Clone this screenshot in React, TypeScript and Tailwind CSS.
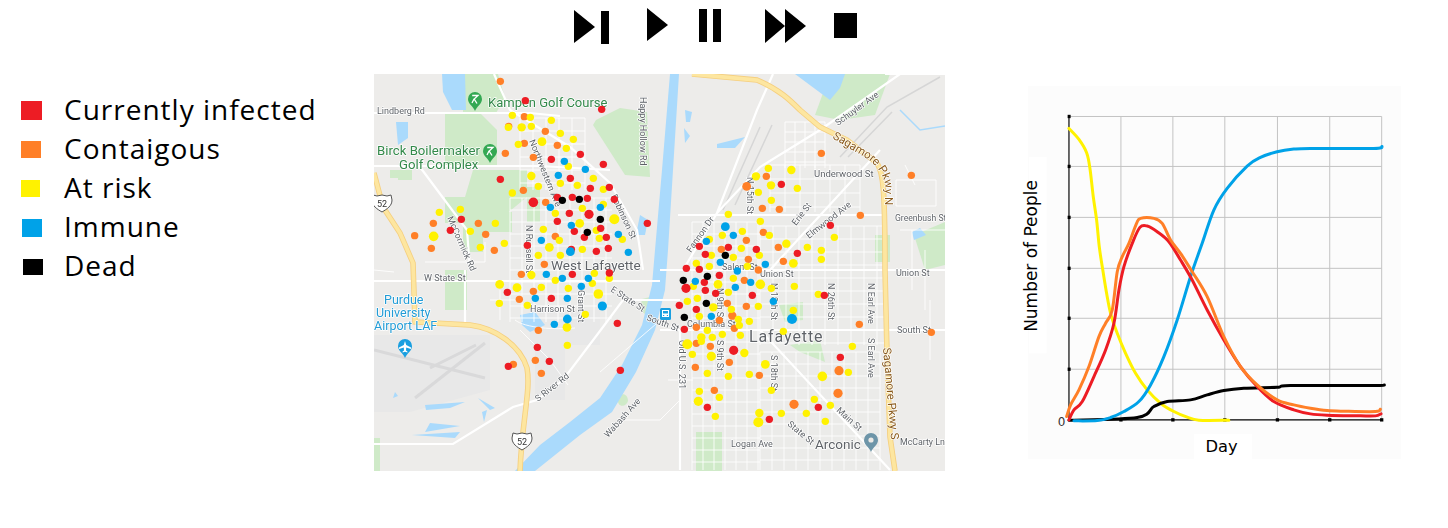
const RED = "#ed1c24";
const ORANGE = "#ff7f27";
const YELLOW = "#fff200";
const BLUE = "#00a2e8";

type Pt = number[];

// dots were read off 3x crops, so convert back to page coords
const toPage = (ox: number, oy: number, pts: Pt[]) =>
  pts.map(([x, y, r]) => [ox + x / 3, oy + y / 3, r ?? 3.7]);

const dotGroups: { color: string; pts: number[][] }[] = [
  {
    color: ORANGE,
    pts: [
      ...toPage(370, 70, [[391,34],[463,140],[416,169],[526,184],[463,220],[562,226],[406,250],[490,262],[460,361],[527,397],[190,460],[134,497],[325,460],[347,493],[184,535],[373,541],[556,499],[523,583]]),
      ...toPage(660, 70, [[484,250],[754,316],[319,319],[260,349,4.4],[307,415],[358,418],[601,436],[310,487],[259,511],[184,538],[355,532],[265,568],[370,574],[295,600]]),
      ...toPage(370, 270, [[454,13],[490,64],[448,88],[505,181],[496,271],[430,283],[514,310]]),
      ...toPage(660, 270, [[253,31],[202,100],[259,109],[217,137,4.2],[178,151],[109,172],[223,175],[109,220],[151,229],[208,277],[106,292],[298,316],[598,163],[814,187],[537,302,4.6],[534,370,4.6],[402,403,4.6],[163,361]]),
    ],
  },
  {
    color: YELLOW,
    pts: [
      ...toPage(370, 70, [[427,136],[481,142],[544,151],[415,172],[455,172,4.2],[484,169],[571,190],[610,208],[516,215,4.4],[445,223],[589,235],[595,289],[484,318,4.2],[670,325],[505,349],[571,340],[622,346],[700,358],[427,369],[637,415],[700,403],[556,430],[733,448,5],[629,460,4.4],[208,427],[271,418],[376,460],[301,484],[191,499,4.8],[520,478],[679,481],[688,505],[757,508],[403,520],[331,532],[538,532,4.4],[568,511],[637,538],[505,556],[571,556]]),
      ...toPage(660, 70, [[325,295],[394,300,4.2],[288,319,4.2],[333,346,4.2],[412,355],[295,367],[334,391],[205,433],[301,454],[247,484],[187,496],[328,496],[148,508],[379,521,4.2],[442,532],[244,535],[484,541],[298,556],[220,562],[154,556],[484,568],[400,580,4.4],[109,580],[148,589],[262,589],[523,502]]),
      ...toPage(370, 270, [[484,15,4.2],[673,10],[556,31],[718,25],[667,40],[389,43,4.4],[441,53,4.4],[514,52],[595,55],[685,72,4.8],[388,100],[472,106],[646,133],[591,172,4.4],[592,226]]),
      ...toPage(660, 270, [[220,25],[174,43,4.4],[301,43,4.8],[403,49],[334,55],[475,73],[100,49],[205,67],[112,85],[82,94],[295,109],[160,112,4.2],[214,118],[118,139],[400,121],[235,148],[238,166],[268,154],[142,181],[187,193],[241,196],[370,184],[124,202,4.2],[157,202],[124,214],[82,223,5],[97,253],[253,249,4.2],[154,259,4.6],[316,283,4.4],[142,310],[205,319],[268,313],[487,319,4.8],[565,307],[577,229],[334,361],[118,364],[178,382],[115,394,4.6],[463,388],[511,406],[298,429,4.2],[364,430],[439,430],[166,439],[295,457,5],[496,454]]),
    ],
  },
  {
    color: RED,
    pts: [
      ...toPage(370, 70, [[466,92],[695,118],[544,268],[631,253],[700,283],[391,328],[601,325],[661,355],[718,352],[562,382],[607,382],[652,385],[733,388],[490,397,4.8],[598,430],[657,433,4.6],[562,454],[613,484],[692,475],[643,502],[709,502],[274,448],[241,481],[472,526],[679,544],[715,535],[832,460],[604,538]]),
      ...toPage(660, 70, [[364,343],[511,466],[118,529],[205,532],[289,538],[136,553],[412,550],[79,595],[118,598]]),
      ...toPage(370, 270, [[607,13],[718,9],[412,67],[544,85],[742,160],[502,232],[538,274],[415,289],[751,301]]),
      ...toPage(660, 270, [[178,16],[133,37],[78,55,4.6],[136,61],[167,70],[277,76],[493,76],[58,106],[109,118],[73,178],[221,241,4.6],[541,262],[475,412],[142,412],[328,448]]),
    ],
  },
  {
    color: BLUE,
    pts: [
      ...toPage(370, 70, [[583,274],[646,298],[565,316],[541,412],[691,412],[604,466],[745,493],[514,511],[601,545,4.4],[775,547]]),
      ...toPage(660, 70, [[196,470,4.4],[220,496],[139,514],[181,577],[316,583]]),
      ...toPage(370, 270, [[529,13],[577,25],[655,25],[634,49],[496,85],[592,85],[697,108,4.6],[592,147,4.4],[553,163]]),
      ...toPage(660, 270, [[232,3],[106,34],[272,37],[226,52],[340,94],[154,139],[396,147,5]]),
    ],
  },
  {
    color: "#000000",
    pts: [
      ...toPage(370, 70, [[577,391],[628,388],[691,448],[652,487]]),
      ...toPage(660, 70, [[196,556]]),
      ...toPage(660, 270, [[70,31],[142,19],[139,100],[73,142]]),
    ],
  },
];

const range = (from: number, to: number, step: number) => {
  const out: number[] = [];
  for (let v = from; v <= to; v += step) out.push(v);
  return out;
};

const grid = (x0: number, x1: number, y0: number, y1: number, sx: number, sy: number) =>
  range(x0, x1, sx).map((x) => `M${x} ${y0}V${y1}`).join("") +
  range(y0, y1, sy).map((y) => `M${x0} ${y}H${x1}`).join("");

const minorRoads = [
  grid(510, 612, 198, 322, 12, 12),
  grid(520, 585, 118, 190, 13, 13),
  grid(692, 760, 222, 470, 11, 12),
  grid(760, 885, 226, 345, 13, 13),
  grid(760, 880, 352, 470, 12, 12),
  grid(785, 825, 122, 168, 10, 10),
  grid(770, 860, 165, 212, 15, 14),
  "M896 180h40v26h-40zM905 165l10 20M900 230h45M912 230v60M925 250v60M930 300v60",
  "M425 262h60v-20M490 300h30M500 290v30M515 320c10 8 40 10 60 8M520 330l30 30 18 25",
  "M374 270l20 2M600 372l70 -60M668 380h25M620 420h40l20 -20v40",
].join("");

const majorRoads = [
  "M374 113H530L560 116",
  "M494 74L510 110L570 147L610 183L637 230L643 270",
  "M374 166H540L610 170",
  "M420 167L467 230L470 270",
  "M374 281H660",
  "M465 270V323",
  "M374 444H453L513 407L537 400L563 380L603 327L623 300L680 300",
  "M660 270H945",
  "M660 330H945",
  "M680 470V330",
  "M683 270L717 213L757 110L773 74",
  "M717 213L760 167L820 130L900 74",
  "M760 330L890 470",
  "M770 270L880 150",
  "M885 74H945",
  "M678 215H885",
].join("");

const rails = "M723 210L760 127M735 205L772 125M840 157L887 107L940 77M848 157L892 112";

const highwayLeft = "M374 173L383 207L400 233L413 263L415 322L470 325C495 328 520 345 527 368C531 390 522 420 520 471";
const highwayRight = "M692 74L757 80C780 90 790 100 800 110L820 127L847 140L877 163C883 172 885 187 885 270L887 353L890 437L895 471";

const GRAY = "#5f6368";
const labels: { t: string; x: number; y: number; r?: number; s?: number; c?: string; ls?: number }[] = [
  { t: "Lindberg Rd", x: 377, y: 114, s: 9 },
  { t: "Northwestern Ave", x: 529, y: 141, r: 68, s: 9 },
  { t: "Happy Hollow Rd", x: 640, y: 97, r: 90, s: 9 },
  { t: "Robinson St", x: 611, y: 196, r: 65, s: 9 },
  { t: "McCormick Rd", x: 447, y: 218, r: 66, s: 9 },
  { t: "N Russell St", x: 526, y: 225, r: 90, s: 9 },
  { t: "West Lafayette", x: 551, y: 270, s: 13.5 },
  { t: "W State St", x: 424, y: 281, s: 9 },
  { t: "Harrison St", x: 530, y: 312, s: 9 },
  { t: "Grant St", x: 578, y: 290, r: 90, s: 9 },
  { t: "E State St", x: 610, y: 291, r: 33, s: 9 },
  { t: "South St", x: 646, y: 320, r: 20, s: 9 },
  { t: "S River Rd", x: 538, y: 402, r: -38, s: 9 },
  { t: "Wabash Ave", x: 608, y: 438, r: -48, s: 9 },
  { t: "Schuyler Ave", x: 838, y: 126, r: -36, s: 9 },
  { t: "Underwood St", x: 814, y: 177, s: 9.5 },
  { t: "Greenbush St", x: 895, y: 221, s: 8.6 },
  { t: "Erie St", x: 796, y: 226, r: -52, s: 9 },
  { t: "Elmwood Ave", x: 809, y: 239, r: -38, s: 9 },
  { t: "Fannon Dr", x: 691, y: 253, r: -55, s: 9 },
  { t: "N 15th St", x: 747, y: 177, r: 90, s: 9 },
  { t: "Salem St", x: 722, y: 270, s: 9 },
  { t: "Union St", x: 760, y: 277, s: 9 },
  { t: "Union St", x: 896, y: 276, s: 9 },
  { t: "N 18th St", x: 771, y: 283, r: 90, s: 9 },
  { t: "N 26th St", x: 828, y: 283, r: 90, s: 9 },
  { t: "N Earl Ave", x: 868, y: 283, r: 90, s: 9 },
  { t: "S Earl Ave", x: 868, y: 338, r: 90, s: 9 },
  { t: "Columbia St", x: 687, y: 327, s: 9 },
  { t: "South St", x: 897, y: 333, s: 9 },
  { t: "Lafayette", x: 749, y: 342, s: 16, ls: 0.9 },
  { t: "S 9th St", x: 717, y: 340, r: 90, s: 9 },
  { t: "N 9th St", x: 717, y: 288, r: 90, s: 9 },
  { t: "Old U.S. 231", x: 679, y: 340, r: 90, s: 9 },
  { t: "S 18th St", x: 771, y: 355, r: 90, s: 9 },
  { t: "Main St", x: 836, y: 411, r: 42, s: 9 },
  { t: "State St", x: 787, y: 425, r: 40, s: 9 },
  { t: "Logan Ave", x: 731, y: 447, s: 9 },
  { t: "Arconic", x: 815, y: 449, s: 13.5 },
  { t: "McCarty Ln", x: 900, y: 445, s: 8.8 },
  { t: "Sagamore Pkwy S", x: 883, y: 348, r: 85, s: 11.5, c: "#8a5a1c" },
  { t: "Kampen Golf Course", x: 488, y: 107, s: 13, c: "#33894a" },
  { t: "Birck Boilermaker", x: 377, y: 155, s: 13.2, c: "#33894a" },
  { t: "Golf Complex", x: 399, y: 169, s: 13.2, c: "#33894a" },
  { t: "Purdue", x: 384, y: 304, s: 12.5, c: "#229cd6" },
  { t: "University", x: 376, y: 317, s: 12.5, c: "#229cd6" },
  { t: "Airport LAF", x: 374, y: 330, s: 12.5, c: "#229cd6" },
];

function Pin({ x, y, color, children }: { x: number; y: number; color: string; children?: React.ReactNode }) {
  return (
    <g transform={`translate(${x} ${y})`}>
      <path d="M0 11C-2 6-7 4-7 -1A7 7 0 1 1 7 -1C7 4 2 6 0 11Z" fill={color} />
      {children}
    </g>
  );
}

function Shield({ x, y }: { x: number; y: number }) {
  return (
    <g transform={`translate(${x} ${y})`}>
      <path d="M-9 -8L-5 -7L0 -8L5 -7L9 -8L10 -3C10 3 5 6 0 9C-5 6 -10 3 -10 -3Z" fill="#fff" stroke="#555" strokeWidth="1" />
      <text x="0" y="3.5" textAnchor="middle" fontSize="9" fontFamily="Roboto, sans-serif" fill="#333">52</text>
    </g>
  );
}

const golfMark = <path d="M-2.8 -4.5H3L-0.8 -1L2 3.5M-1 -1L-3 3" stroke="#fff" strokeWidth="1.3" fill="none" />;

function MapPanel() {
  return (
    <svg viewBox="374 74 571 397" className="block w-[571px] h-[397px] shrink-0 blur-[0.35px]">
      <defs>
        <path id="sagamore" d="M832 138L866 158C878 166 884 176 885 186L885 215" />
      </defs>
      <rect x="374" y="74" width="571" height="397" fill="#edecea" />

      {/* built up areas */}
      <path d="M500 190H640V330H500ZM690 170H880V470H690Z" fill="#ebebe9" />
      <path d="M530 310H600V345H530ZM535 345H565V400H535ZM374 335H490V390L410 412H374Z" fill="#e8e8e8" />

      {/* parks */}
      <g fill="#cfeac8">
        <path d="M463 74H498L505 98L496 113H463Z" />
        <path d="M445 113H480L497 130V167H445Z" />
        <path d="M473 170H527V197L505 215H465V197Z" />
        <path d="M445 197H480V223H445Z" />
        <path d="M463 223H483V252H463ZM470 212H512V232H470Z" />
        <path d="M527 187H540V222H527Z" />
        <path d="M596 120L620 108L647 112L650 177L625 175L593 125Z" />
        <path d="M445 270H467V310H445Z" />
        <path d="M390 170H412V178H390ZM398 173H412V180H398Z" />
        <path d="M830 74L890 74L875 115L840 120L815 115Z" />
        <path d="M779 305L803 302V320L785 322Z" />
        <path d="M790 345L820 340L825 362L800 352Z" />
        <path d="M696 432H722V471H696Z" />
        <path d="M875 235H890V262H875Z" />
        <path d="M914 235L945 222V265L925 270Z" />
        <path d="M618 397C622 392 628 394 628 401C626 408 616 408 618 397Z" />
        <path d="M373 438H380V471H373Z" />
        <path d="M642 299L658 295L650 318L640 310Z" />
      </g>

      {/* water */}
      <g fill="#aadafc">
        <path d="M670 74L662 170L655 250L652 285L642 325L622 365L600 398L570 422L540 445L515 471H535L555 455L580 435L612 412L636 372L655 330L665 290L668 250L673 170L679 74Z" />
        <path d="M442 74H465L466 110H452L443 92Z" />
        <path d="M396 122H408V138L398 145Z" />
        <path d="M795 74H845L840 88L830 100Z" />
        <path d="M900 110L920 130L945 126" fill="none" stroke="#aadafc" strokeWidth="1.5" />
        <path d="M685 110L692 112L690 122H686ZM684 128L690 136L685 143Z" />
        <path d="M717 144L745 137L735 148H717Z" />
        <path d="M640 215L648 220L645 235H636Z" />
        <path d="M912 232L920 228L926 235L914 240Z" />
        <path d="M520 315L535 312L545 325L530 332L522 325Z" />
        <path d="M425 405L465 402L450 408L426 410ZM430 423L460 426L425 432ZM412 435L460 432L455 438ZM478 398L495 408L490 410Z" />
        <path d="M395 392L398 396L393 398ZM482 412L487 410L484 422Z" />
      </g>

      {/* airport and rail */}
      <g stroke="#d9d9da" fill="none" strokeWidth="3">
        <path d="M374 350L485 378" />
        <path d="M415 398L485 343" />
        <path d="M430 368L476 345" />
      </g>
      <path d={rails} stroke="#d6d6d6" strokeWidth="1.5" fill="none" />

      {/* streets */}
      <path d={minorRoads} stroke="#fff" strokeOpacity="0.85" strokeWidth="1" fill="none" />
      <path d={majorRoads} stroke="#fff" strokeWidth="2.2" fill="none" />
      <g fill="none">
        <path d={highwayLeft} stroke="#f5cf7f" strokeWidth="5.5" />
        <path d={highwayLeft} stroke="#fde6a0" strokeWidth="3.8" />
        <path d={highwayRight} stroke="#f5cf7f" strokeWidth="5.5" />
        <path d={highwayRight} stroke="#fde6a0" strokeWidth="3.8" />
      </g>

      {/* labels */}
      <g fontFamily="Roboto, sans-serif" stroke="#fff" strokeWidth="1.4" paintOrder="stroke" strokeLinejoin="round">
        {labels.map((l) => (
          <text
            key={`${l.t}-${l.x}`}
            x={l.x}
            y={l.y}
            fontSize={l.s}
            letterSpacing={l.ls}
            fill={l.c ?? GRAY}
            transform={l.r ? `rotate(${l.r} ${l.x} ${l.y})` : undefined}
          >
            {l.t}
          </text>
        ))}
        <text fontSize="11.5" fill="#8a5a1c">
          <textPath href="#sagamore">Sagamore Pkwy N</textPath>
        </text>
      </g>

      <Pin x={475} y={100} color="#34a853">{golfMark}</Pin>
      <Pin x={490} y={152} color="#34a853">{golfMark}</Pin>
      <Pin x={405} y={347} color="#1a9fe0">
        <path d="M0 -6L1.2 -2L6 0.5V2L1.2 0.5L1 3.5L2.4 4.5V5.5L0 4.8L-2.4 5.5V4.5L-1 3.5L-1.2 0.5L-6 2V0.5L-1.2 -2Z" fill="#fff" />
      </Pin>
      <Pin x={871} y={441} color="#6d95a8">
        <circle cx="0" cy="-1" r="2.6" fill="#ebe9e5" />
      </Pin>
      <rect x="660" y="308" width="11" height="12" rx="1.5" fill="#1a9fe0" />
      <path d="M662 310h7v7h-7z" fill="#fff" />
      <path d="M663 311h5v2.5h-5zM663 315h1.2v1h-1.2zM666.8 315h1.2v1h-1.2z" fill="#1a9fe0" />
      <Shield x={382} y={203} />
      <Shield x={522} y={441} />

      {dotGroups.map((g) =>
        g.pts.map(([x, y, r]) => <circle key={`${g.color}-${x}-${y}`} cx={x} cy={y} r={r} fill={g.color} />),
      )}
    </svg>
  );
}

// catmull-rom through the read points so the lines don't look faceted
const smooth = (raw: string) => {
  const p = raw.split(" ").map((s) => s.split(",").map(Number));
  let d = `M${p[0][0]} ${p[0][1]}`;
  for (let i = 0; i < p.length - 1; i++) {
    const a = p[Math.max(i - 1, 0)];
    const b = p[i];
    const c = p[i + 1];
    const e = p[Math.min(i + 2, p.length - 1)];
    d += `C${b[0] + (c[0] - a[0]) / 6} ${b[1] + (c[1] - a[1]) / 6} ${c[0] - (e[0] - b[0]) / 6} ${c[1] - (e[1] - b[1]) / 6} ${c[0]} ${c[1]}`;
  }
  return d;
};

const curves: { color: string; pts: string }[] = [
  { color: "#fff200", pts: "175,145 205,178 228,218 238,265 248,350 258,420 266,500 275,560 288,640 300,700 320,760 345,820 375,880 410,930 450,970 490,995 530,1012 565,1021 655,1021" },
  { color: "#000000", pts: "175,1021 380,1013 430,980 470,965 540,960 590,945 640,932 700,925 800,922 840,917 1090,917 1122,915" },
  { color: "#00a2e8", pts: "190,1023 260,1022 300,1013 340,995 385,965 420,915 460,830 500,720 540,590 575,490 610,390 650,325 710,258 750,232 800,215 850,207 900,205 1090,205 1115,199" },
  { color: "#ed1c24", pts: "175,1020 190,990 215,965 250,890 285,810 310,730 325,630 340,560 365,490 388,442 410,438 440,455 475,485 510,540 545,600 590,690 640,780 690,860 740,920 790,965 850,990 900,1002 950,1006 1050,1008 1095,1008 1112,1002" },
  { color: "#ff7f27", pts: "168,1010 180,975 205,930 235,860 265,770 285,730 305,690 320,575 335,530 355,490 378,430 390,415 430,415 455,430 480,480 510,520 545,575 590,650 640,770 690,860 740,915 800,960 850,975 900,985 950,992 1000,994 1095,995 1110,988" },
];

const gridX = [331, 487, 643, 801, 958, 1114];
const gridY = [109, 259, 412, 565, 715, 868];

// chart is drawn in the units of the 3x crop, hence the large numbers
function ChartPanel() {
  return (
    <svg viewBox="52 18 1120 1119" className="block w-[373px] h-[373px] shrink-0 overflow-visible">
      <rect x="52" y="18" width="1120" height="1119" fill="#fcfcfc" />
      <g stroke="#c3c3c3" strokeWidth="3">
        {gridX.map((x) => <line key={x} x1={x} y1="109" x2={x} y2="1020" />)}
        {gridY.map((y) => <line key={y} x1="175" y1={y} x2="1114" y2={y} />)}
      </g>
      <rect x="55" y="230" width="53" height="590" fill="#fff" />
      <rect x="550" y="1062" width="175" height="75" fill="#fff" />
      <path d="M175 109V1020H1114" stroke="#000" strokeWidth="3.5" fill="none" />
      {gridY.map((y) => <rect key={y} x="171" y={y - 5} width="9" height="10" fill="#000" />)}
      {gridX.map((x) => <rect key={x} x={x - 5} y="1015" width="10" height="10" fill="#000" />)}
      {curves.map((c) => (
        <path key={c.color} d={smooth(c.pts)} fill="none" stroke={c.color} strokeWidth="9" strokeLinejoin="round" strokeLinecap="round" />
      ))}
      <g fontFamily="'DejaVu Sans', sans-serif" fill="#000">
        <text x="153" y="1038" textAnchor="middle" fontSize="36" fill="#333">0</text>
        <text x="633" y="1115" textAnchor="middle" fontSize="49">Day</text>
        <text x="80" y="528" textAnchor="middle" fontSize="51" transform="rotate(-90 80 528)">Number of People</text>
      </g>
    </svg>
  );
}

const legend = [
  { label: "Currently infected", swatch: "w-[21px] h-[19px] bg-[#ed1c24] ml-[21px]" },
  { label: "Contaigous", swatch: "w-[20px] h-[17px] bg-[#ff7f27] ml-[21px]" },
  { label: "At risk", swatch: "w-[19px] h-[17px] bg-[#fff200] ml-[21px]" },
  { label: "Immune", swatch: "w-[20px] h-[18px] bg-[#00a2e8] ml-[22px]" },
  { label: "Dead", swatch: "w-[20px] h-[16px] bg-black ml-[23px]" },
];

function Controls() {
  return (
    <div className="flex items-start h-[74px] pt-[8px] pl-[574px]">
      <svg viewBox="0 8 35 36" className="w-[35px] h-[36px] fill-black">
        <path d="M0 10L21 27L0 43Z" />
        <rect x="27" y="11" width="8" height="33" />
      </svg>
      <svg viewBox="0 8 21 36" className="ml-[38px] w-[21px] h-[36px] fill-black">
        <path d="M0 8L21 25L0 41Z" />
      </svg>
      <svg viewBox="0 8 22 36" className="ml-[31px] w-[22px] h-[36px] fill-black">
        <rect x="0" y="9" width="8" height="33" />
        <rect x="14" y="9" width="8" height="33" />
      </svg>
      <svg viewBox="0 8 41 36" className="ml-[44px] w-[41px] h-[36px] fill-black">
        <path d="M0 9L20 26L0 43Z" />
        <path d="M20 9L41 26L20 43Z" />
      </svg>
      <svg viewBox="0 8 23 36" className="ml-[28px] w-[23px] h-[36px] fill-black">
        <rect x="0" y="13" width="23" height="25" />
      </svg>
    </div>
  );
}

export default function App() {
  return (
    <div className="w-[1448px] h-[528px] bg-white overflow-hidden">
      <Controls />
      <div className="flex items-start">
        <div className="w-[374px] shrink-0 pt-[17px] font-['Open_Sans',sans-serif] text-[28px] tracking-[1px] text-black">
          {legend.map((l) => (
            <div key={l.label} className="flex items-center h-[39px]">
              <div className="w-[64px] shrink-0">
                <div className={l.swatch} />
              </div>
              <span className="pb-[4px]">{l.label}</span>
            </div>
          ))}
        </div>
        <MapPanel />
        <div className="ml-[83px] mt-[12px]">
          <ChartPanel />
        </div>
      </div>
    </div>
  );
}
